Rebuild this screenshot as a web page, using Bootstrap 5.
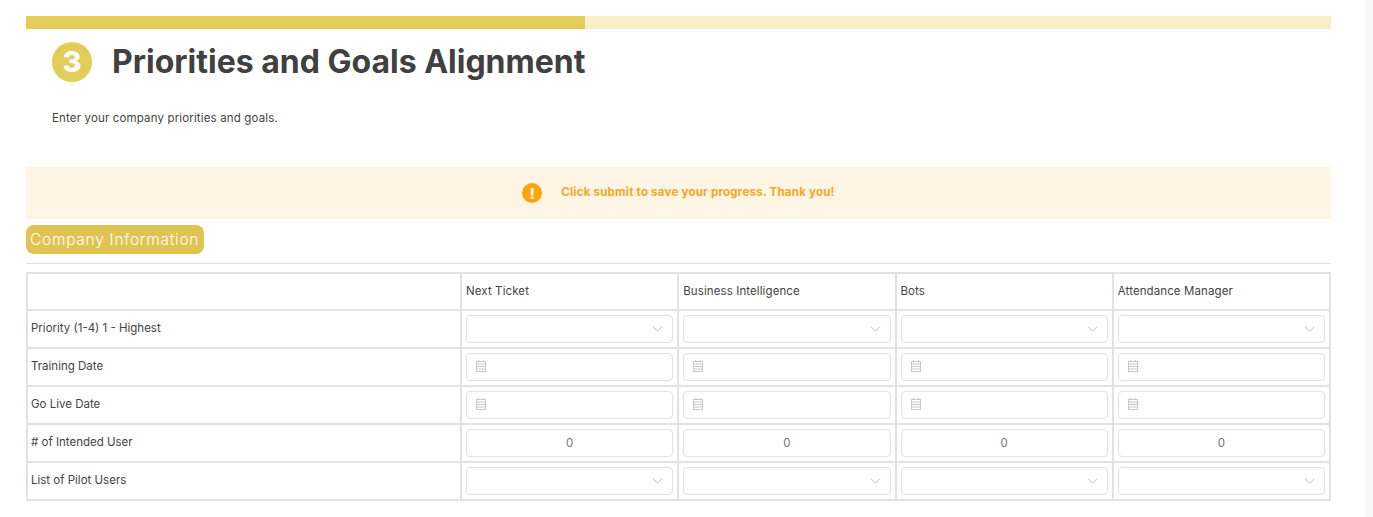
<!DOCTYPE html>
<html lang="en">
<head>
    <meta charset="UTF-8">
    <meta name="viewport" content="width=device-width, initial-scale=1.0">
    <title>Priorities and Goals Alignment</title>
    <link href="https://cdn.jsdelivr.net/npm/bootstrap@5.3.3/dist/css/bootstrap.min.css" rel="stylesheet">
    <style>
        html, body { height: 517px; overflow: hidden; }
        body { background: #fff; font-family: Inter, "Open Sans", sans-serif; color: #3f3f3f; }
        .page-wrap { width: 1365px; height: 517px; padding: 16px 34px 0 26px; }
        .side-strip { position: fixed; top: 0; right: 0; width: 8px; height: 100%; background: #f8f8f8; }
        .step-progress { height: 13px; border-radius: 0; background: #f6efc8; }
        .step-progress .progress-bar { background: #e3cd59; }
        .step-head { height: 66px; padding-left: 26px; gap: 20px; }
        .step-num { width: 40px; height: 40px; background: #e3cd59; color: #fff; font-size: 29px; font-weight: 800; }
        .step-title { font-size: 32px; font-weight: 700; color: #404040; margin: 0; }
        .step-desc { font-size: 11.5px; color: #444; padding-left: 26px; margin: 16px 0 42px; line-height: 14px; letter-spacing: 0.15px; }
        .notice-bar { height: 52px; background: #fef5e5; gap: 19px; color: #f5a623; font-size: 11.5px; font-weight: 700; letter-spacing: 0.23px; }
        .notice-ico { width: 20px; height: 20px; background: #ffa40a; color: #fff; font-size: 14px; font-weight: 800; }
        .section-tag { display: inline-block; margin-top: 6px; height: 29px; line-height: 29px; padding: 0 5px 0 4px; background: #dfc452; color: #fff; font-size: 15.5px; font-weight: 300; border-radius: 8px; letter-spacing: 0.72px; }
        .section-rule { margin: 9px 0 8px; border: 0; border-top: 1px solid #dfe3e6; opacity: 1; }
        .goal-table { table-layout: fixed; border-collapse: collapse; margin: 0; border: 2px solid #e2e2e2; font-size: 11.5px; color: #444; letter-spacing: 0.1px; }
        .goal-table td { border: 2px solid #e2e2e2; padding: 0 4px; height: 38px; vertical-align: middle; }
        .goal-table tr:first-child td { height: 37px; }
        .goal-table .lead-col { width: 434px; }
        .goal-table tr td:first-child { padding-left: 3px; letter-spacing: 0; }
        .goal-field { height: 28px; min-height: 28px; padding: 0 8px; font-size: 11.5px; color: #777; border: 1px solid #e2e2e2; border-radius: 4px; box-shadow: none; }
        .goal-select { background-image: url("data:image/svg+xml,%3csvg xmlns='http://www.w3.org/2000/svg' viewBox='0 0 12 8'%3e%3cpath fill='none' stroke='%23b5b5b5' stroke-width='1' d='M1 1.5 6 6.5l5-5'/%3e%3c/svg%3e"); background-position: right 9px center; background-size: 11px 8px; }
        .cal-ico { position: absolute; left: 10px; top: 7px; width: 10px; height: 12px; pointer-events: none; }
    </style>
</head>
<body>
    <div class="side-strip"></div>
    <div class="page-wrap">
        <div class="progress step-progress">
            <div class="progress-bar" style="width: 42.85%"></div>
        </div>
        <div class="d-flex align-items-center step-head">
            <span class="d-flex align-items-center justify-content-center rounded-circle step-num">3</span>
            <h1 class="step-title">Priorities and Goals Alignment</h1>
        </div>
        <p class="step-desc">Enter your company priorities and goals.</p>
        <div class="d-flex align-items-center justify-content-center notice-bar">
            <span class="d-flex align-items-center justify-content-center rounded-circle notice-ico">!</span>
            <span>Click submit to save your progress. Thank you!</span>
        </div>
        <span class="section-tag">Company Information</span>
        <hr class="section-rule">
        <table class="table goal-table" id="goals"></table>
    </div>

    <script src="https://cdn.jsdelivr.net/npm/bootstrap@5.3.3/dist/js/bootstrap.bundle.min.js"></script>
    <script>
        const products = ['Next Ticket', 'Business Intelligence', 'Bots', 'Attendance Manager'];
        const calIcon = `<svg class="cal-ico" viewBox="0 0 10 12" fill="none" stroke="#c8c8c8" stroke-width="1">
            <rect x="0.5" y="1.5" width="9" height="10"/><path d="M0.5 4h9M0.5 6.5h9M0.5 9h9M2.5 0v2M7.5 0v2"/></svg>`;
        const cells = {
            select: () => '<select class="form-select goal-field goal-select"></select>',
            date: () => `<div class="position-relative"><input type="text" class="form-control goal-field">${calIcon}</div>`,
            number: () => '<input type="text" class="form-control goal-field text-center" value="0">'
        };
        const rows = [
            ['Priority (1-4) 1 - Highest', 'select'],
            ['Training Date', 'date'],
            ['Go Live Date', 'date'],
            ['# of Intended User', 'number'],
            ['List of Pilot Users', 'select']
        ];

        let html = '<tr><td class="lead-col"></td>' + products.map(p => `<td>${p}</td>`).join('') + '</tr>';
        rows.forEach(r => {
            html += `<tr><td>${r[0]}</td>` + products.map(() => `<td>${cells[r[1]]()}</td>`).join('') + '</tr>';
        });
        document.getElementById('goals').innerHTML = html;
    </script>
</body>
</html>
